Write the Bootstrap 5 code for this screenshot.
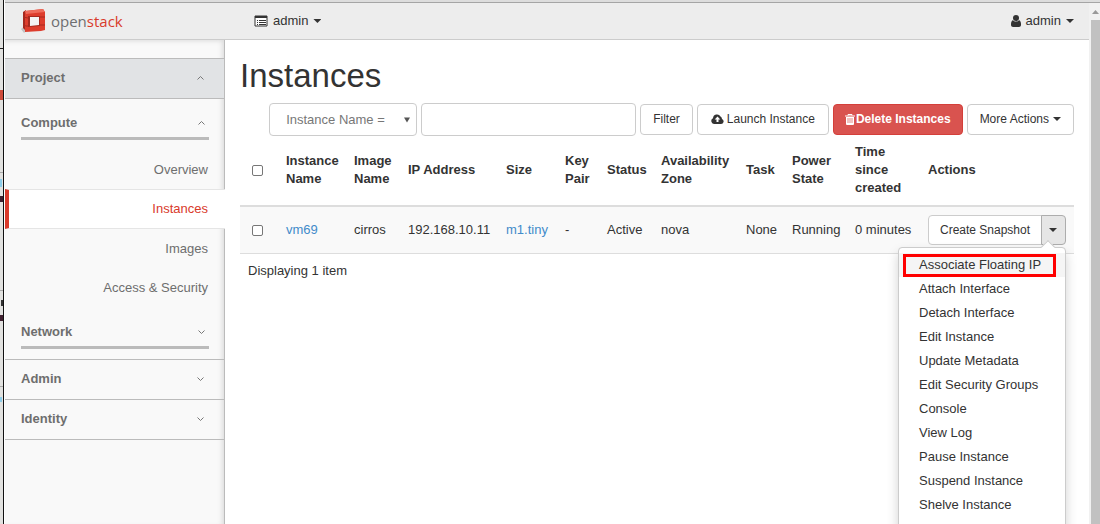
<!DOCTYPE html>
<html lang="en">
<head>
<meta charset="utf-8">
<meta name="viewport" content="width=device-width, initial-scale=1">
<title>Instances - OpenStack Dashboard</title>
<link href="https://cdn.jsdelivr.net/npm/bootstrap@5.3.0/dist/css/bootstrap.min.css" rel="stylesheet">
<style>
body{font-family:"Liberation Sans",Arial,sans-serif;font-size:13px;line-height:18px;color:#333}
a{text-decoration:none;color:#428bca}
svg{display:block}
/* strip of the window behind, then the window frame */
.edge{width:5px;border-right:1px solid #fff;background:linear-gradient(#111,#111) 3px 0/1px 100% no-repeat,linear-gradient(#cf4b3a,#cf4b3a) 0 90px/3px 10px no-repeat,linear-gradient(#222,#222) 0 48px/3px 1px no-repeat,linear-gradient(#8ccdea,#8ccdea) 0 179px/2px 8px no-repeat,linear-gradient(#402030,#402030) 0 196px/3px 6px no-repeat,linear-gradient(#333,#333) 1px 300px/2px 6px no-repeat,linear-gradient(#402030,#402030) 0 315px/3px 6px no-repeat,linear-gradient(#8ccdea,#8ccdea) 0 397px/2px 5px no-repeat,linear-gradient(#aaa,#aaa) 0 172px/3px 1px no-repeat,linear-gradient(#aaa,#aaa) 0 290px/3px 1px no-repeat,linear-gradient(#aaa,#aaa) 0 386px/3px 1px no-repeat,#e2e2e0}
.chrome-line{height:3px;background:#ddd;border-bottom:1px solid #a5a5a5}
.topbar{height:37px;background:#ededed;border-bottom:1px solid #ccc;padding:0 15px 0 16px}
.topbar .menu-btn{font-size:13px;line-height:18px;color:#333;gap:5px}
.brand{width:233px;gap:4px}
.brand-name{font-family:"Liberation Sans Narrow","Open Sans",sans-serif;font-size:15px;line-height:24px;color:#6d6e70}
.brand-name b{color:#d93a2b;font-weight:400}
.side{width:220px;background:#f9f9f9;border-right:1px solid #bbb;box-shadow:inset -5px 0 5px -3px #ddd,inset 0 5px 5px -4px #ddd;color:#6e6e6e;padding-top:18px}
.side button{color:#6e6e6e;font-weight:700;padding:0 20px 2px 16px}
.panel-head{height:40px;border-top:1px solid #bbb!important}
.panel-head.open{height:41px;background:#e1e3e5;border-bottom:1px solid #bbb!important}
.panel-last{border-bottom:1px solid #bbb}
.group-head{margin:0 15px 10px 16px;border-bottom:3px solid #bbb}
.group-head button{padding:15px 4px 5px 0}
.side-links{margin-bottom:1px}
.side-links a{display:block;padding:11px 16px 10px;text-align:right;color:#6e6e6e}
.side-links a.current{margin-right:-1px;padding:10px 17px 10px 0;background:#fff;color:#d93a2b;border:solid #e5e5e5;border-width:1px 0;border-left:4px solid #d93a2b}
.main-col{padding:19px 15px 0}
h1{font-size:33px;line-height:34px;margin-bottom:10px;font-weight:400}
.tools{gap:4px}
.tools .form-select,.tools .form-control{height:33px;font-size:13px;line-height:18px;border-color:#ccc;border-radius:4px;color:#777}
.tools .form-select{width:148px;padding:6px 24px 6px 16px;background:#fff url("data:image/svg+xml,%3Csvg xmlns='http://www.w3.org/2000/svg' viewBox='0 0 7 6'%3E%3Cpath d='M0 0h7L3.500 6z' fill='%23555'/%3E%3C/svg%3E") no-repeat right 6px center/6px 6px}
.tools .form-control{width:215px}
.hz{--bs-btn-font-size:12px;--bs-btn-line-height:18px;--bs-btn-padding-x:12px;--bs-btn-padding-y:5px;--bs-btn-border-radius:4px;--bs-btn-color:#333;--bs-btn-bg:#fff;--bs-btn-border-color:#ccc;--bs-btn-hover-bg:#e6e6e6;--bs-btn-hover-border-color:#adadad;height:31px;gap:4px}
.tools .hz{padding-top:4px}
.hz-launch{--bs-btn-padding-x:13px;gap:3px}
.hz-danger{--bs-btn-padding-x:11px;gap:1px;--bs-btn-color:#fff;--bs-btn-bg:#d9534f;--bs-btn-border-color:#d43f3a;--bs-btn-hover-color:#fff;--bs-btn-hover-bg:#c9302c}
.row-btns{width:138px}
.row-btns .hz{height:30px;--bs-btn-padding-x:10px}
.row-btns .toggle{--bs-btn-padding-x:7px;--bs-btn-bg:#e6e6e6;--bs-btn-border-color:#adadad;flex:0 0 25px;border-radius:0 4px 4px 0!important}
.tri{width:8px;height:4px;background:currentColor;clip-path:polygon(0 0,100% 0,50% 100%)}
.grid{table-layout:fixed;margin:0;--bs-table-color:#333;color:#333}
.grid>:not(caption)>*>*{padding:8px 0 8px 8px;border:0;vertical-align:middle}
.grid thead th{padding-top:7px;padding-bottom:8px;border-bottom:2px solid #ddd}
.grid tbody td{background:#f9f9f9;border-bottom:1px solid #ddd}
.c38{width:38px}.c68{width:68px}.c54{width:54px}.c98{width:98px}.c59{width:59px}.c42{width:42px}.c85{width:85px}.c46{width:46px}.c63{width:63px}.c73{width:73px}
.form-check-input{width:11px;height:11px;margin:0 0 0 4px;display:block;border:1px solid #777;border-radius:2px!important}
.act-menu{top:32px;right:0;width:168px;padding:5px 0;font-size:13px;border:1px solid #ccc;border-radius:4px;box-shadow:0 6px 12px rgba(0,0,0,.18)}
.act-menu::before{content:"";position:absolute;top:-6px;right:12px;width:10px;height:10px;background:#fff;border:solid #ccc;border-width:1px 0 0 1px;transform:rotate(45deg)}
.act-menu .dropdown-item{padding:3px 20px;line-height:18px;color:#333}
.act-menu .hover{background:#f5f5f5;position:relative}
.act-menu .hover::after{content:"";position:absolute;inset:1px 9px 0 4px;border:3px solid #f00}
.count{padding:8px}
.scroll{width:11px;background:#c1c1c1;border-left:2px solid #f1f1f1}
.scroll-up{height:17px;background:#f1f1f1;padding:7px 0 0 1px}
</style>
</head>
<body class="vh-100 overflow-hidden d-flex">
<div class="edge flex-shrink-0"></div>
<div class="flex-fill d-flex flex-column">
  <div class="chrome-line flex-shrink-0"></div>
  <div class="d-flex flex-fill">
    <div class="flex-fill d-flex flex-column">
      <header class="topbar d-flex align-items-center flex-shrink-0">
        <a href="#" class="brand d-flex align-items-center">
          <svg width="26" height="26" viewBox="0 0 26 26" aria-hidden="true"><path d="M0 21l4-3v6l-1 1z" fill="#999" opacity=".5"/><path d="M2 4L5 2v21l-3-3z" fill="#a52a20"/><path d="M4 3L22 1l2 3v18l-4 1-16 1z" fill="#dd3d2d"/><path d="M4 3l18-2 2 3L5 6z" fill="#ee6c5c"/><path d="M2 9l5 1M19 9h5M2 17l3 1h3M19 17h5" stroke="#a92b20" fill="none"/><path d="M7 8h12v10l-12 1z" fill="#a52a20"/><path d="M9 9h9v8l-9 1z" fill="#f4f4f4"/></svg>
          <span class="brand-name">open<b>stack</b></span>
        </a>
        <button type="button" class="menu-btn btn border-0 p-0 d-flex align-items-center">
          <svg width="14" height="12" viewBox="0 0 14 12"><path d="M1 1h12v10H1z" fill="#fff" stroke="#333"/><path d="M1 1h12v2H1z" fill="#333"/><path d="M3 5.500h1M5 5.500h7M3 7.500h1M5 7.500h7M3 9.500h1M5 9.500h7" stroke="#333"/></svg>admin<span class="tri"></span></button>
        <button type="button" class="menu-btn btn border-0 p-0 d-flex align-items-center ms-auto">
          <svg width="10" height="12" viewBox="0 0 10 12" fill="#333"><circle cx="5" cy="3" r="3"/><path d="M2 5c1 2 5 2 6 0 2 1 2 3 2 5 0 1-1 2-2 2H2c-1 0-2-1-2-2 0-2 0-4 2-5z"/></svg>admin<span class="tri"></span></button>
      </header>
      <div class="d-flex flex-fill">
        <nav class="side flex-shrink-0">
          <button type="button" class="panel-head open border-0 w-100 d-flex justify-content-between align-items-center">Project <svg width="7" height="4" viewBox="0 0 7 4"><path d="M.5 3.500l3-3 3 3" fill="none" stroke="#777"/></svg></button>
          <div class="group-head"><button type="button" class="border-0 bg-transparent w-100 d-flex justify-content-between align-items-center">Compute <svg width="7" height="4" viewBox="0 0 7 4"><path d="M.5 3.500l3-3 3 3" fill="none" stroke="#777"/></svg></button></div>
          <ul class="side-links list-unstyled">
            <li><a href="#">Overview</a></li>
            <li><a href="#" class="current" aria-current="page">Instances</a></li>
            <li><a href="#">Images</a></li>
            <li><a href="#">Access &amp; Security</a></li>
          </ul>
          <div class="group-head"><button type="button" class="border-0 bg-transparent w-100 d-flex justify-content-between align-items-center">Network <svg width="7" height="4" viewBox="0 0 7 4"><path d="M.5.500l3 3 3-3" fill="none" stroke="#777"/></svg></button></div>
          <button type="button" class="panel-head border-0 bg-transparent w-100 d-flex justify-content-between align-items-center">Admin <svg width="7" height="4" viewBox="0 0 7 4"><path d="M.5.500l3 3 3-3" fill="none" stroke="#777"/></svg></button>
          <div class="panel-last"><button type="button" class="panel-head border-0 bg-transparent w-100 d-flex justify-content-between align-items-center">Identity <svg width="7" height="4" viewBox="0 0 7 4"><path d="M.5.500l3 3 3-3" fill="none" stroke="#777"/></svg></button></div>
        </nav>
        <main class="main-col flex-fill">
          <h1>Instances</h1>
          <div class="tools d-flex justify-content-end align-items-center">
            <select class="form-select" aria-label="Filter field"><option>Instance Name =</option></select>
            <input type="text" class="form-control" aria-label="Filter value">
            <button type="button" class="btn hz">Filter</button>
            <button type="button" class="btn hz hz-launch d-flex align-items-center"><svg width="13" height="10" viewBox="0 0 13 10"><path d="M3 10a3 3 0 0 1-1-5.700A4 4 0 0 1 9.500 2.500 3 3 0 0 1 11 5a2.600 2.600 0 0 1-1 5z" fill="#333"/><path d="M6.500 2.500L3.700 5.500h1.800V8h2V5.500h1.800z" fill="#fff"/></svg>Launch Instance</button>
            <button type="button" class="btn hz hz-danger fw-bold d-flex align-items-center"><svg width="10" height="11" viewBox="0 0 10 11"><path d="M3 1.500V.5h4v1M0 2h10" stroke="#fff" fill="none"/><path d="M1 3h8v7q0 1-1 1H2q-1 0-1-1z" fill="#fff"/><path d="M3 4v5M5 4v5M7 4v5" stroke="#d9534f" stroke-width=".7"/></svg>Delete Instances</button>
            <button type="button" class="btn hz d-flex align-items-center">More Actions<span class="tri"></span></button>
          </div>
          <table class="table grid">
            <thead><tr>
              <th class="c38"><input class="form-check-input" type="checkbox" aria-label="Select all"></th>
              <th class="c68">Instance Name</th><th class="c54">Image Name</th><th class="c98">IP Address</th><th class="c59">Size</th><th class="c42">Key Pair</th><th class="c54">Status</th><th class="c85">Availability Zone</th><th class="c46">Task</th><th class="c63">Power State</th><th class="c73">Time since created</th><th>Actions</th>
            </tr></thead>
            <tbody><tr>
              <td><input class="form-check-input" type="checkbox" aria-label="Select vm69"></td>
              <td><a href="#">vm69</a></td><td>cirros</td><td>192.168.10.11</td><td><a href="#">m1.tiny</a></td><td>-</td><td>Active</td><td>nova</td><td>None</td><td>Running</td><td>0 minutes</td>
              <td><div class="btn-group row-btns">
                <button type="button" class="btn hz">Create Snapshot</button>
                <button type="button" class="btn hz toggle d-flex align-items-center" aria-label="More row actions" aria-expanded="true"><span class="tri"></span></button>
                <ul class="dropdown-menu act-menu show">
                  <li><a class="dropdown-item hover" href="#">Associate Floating IP</a></li>
                  <li><a class="dropdown-item" href="#">Attach Interface</a></li>
                  <li><a class="dropdown-item" href="#">Detach Interface</a></li>
                  <li><a class="dropdown-item" href="#">Edit Instance</a></li>
                  <li><a class="dropdown-item" href="#">Update Metadata</a></li>
                  <li><a class="dropdown-item" href="#">Edit Security Groups</a></li>
                  <li><a class="dropdown-item" href="#">Console</a></li>
                  <li><a class="dropdown-item" href="#">View Log</a></li>
                  <li><a class="dropdown-item" href="#">Pause Instance</a></li>
                  <li><a class="dropdown-item" href="#">Suspend Instance</a></li>
                  <li><a class="dropdown-item" href="#">Shelve Instance</a></li>
                  <li><a class="dropdown-item" href="#">Resize Instance</a></li>
                </ul>
              </div></td>
            </tr></tbody>
          </table>
          <div class="count">Displaying 1 item</div>
        </main>
      </div>
    </div>
    <div class="scroll flex-shrink-0"><div class="scroll-up"><svg width="7" height="4" viewBox="0 0 7 4"><path d="M0 4l3.500-4L7 4z" fill="#999"/></svg></div></div>
  </div>
</div>
<script src="https://cdn.jsdelivr.net/npm/bootstrap@5.3.0/dist/js/bootstrap.bundle.min.js"></script>
</body>
</html>
